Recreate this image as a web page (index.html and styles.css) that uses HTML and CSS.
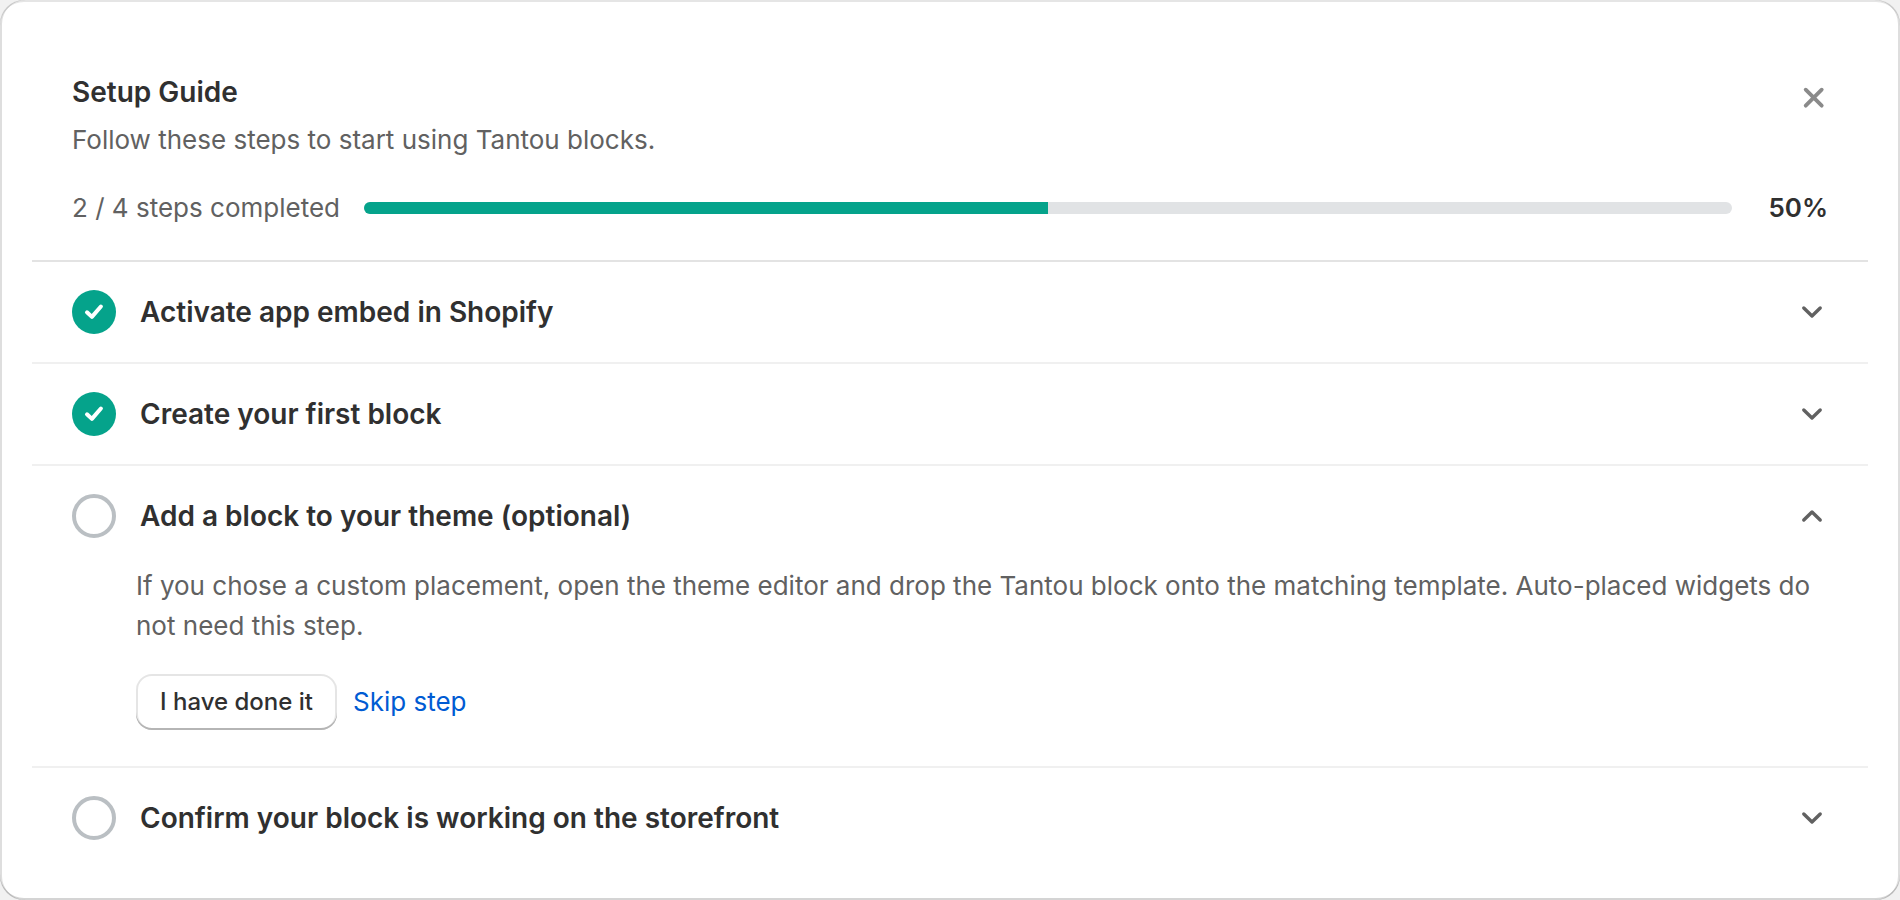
FILE: index.html
```html
<!DOCTYPE html>
<html lang="en">
<head>
    <meta charset="UTF-8">
    <meta name="viewport" content="width=device-width, initial-scale=1.0">
    <title>Setup Guide</title>
    <link rel="stylesheet" href="styles.css">
</head>
<body>
    <main class="card">
        <header class="guide-header">
            <div class="title-row">
                <div class="titles">
                    <h1>Setup Guide</h1>
                    <p>Follow these steps to start using Tantou blocks.</p>
                </div>
                <button type="button" class="close" aria-label="Dismiss setup guide">
                    <svg viewBox="0 0 28 28"><path d="M5.7 6.7l16 16M21.7 6.7l-16 16"/></svg>
                </button>
            </div>
            <div class="progress-row">
                <span id="progressLabel">2 / 4 steps completed</span>
                <div class="progress" role="progressbar" aria-labelledby="progressLabel" aria-valuenow="50" aria-valuemin="0" aria-valuemax="100">
                    <div class="progress-fill" style="width: 50%"></div>
                </div>
                <strong>50%</strong>
            </div>
        </header>

        <details class="step">
            <summary>
                <span class="status done">
                    <svg viewBox="0 0 44 44"><path d="M15 22.3l4.9 4.6 9-10.4"/></svg>
                </span>
                <h2>Activate app embed in Shopify</h2>
                <svg class="chevron" viewBox="0 0 32 32"><path d="M7.8 12l8.2 8 8.2-8"/></svg>
            </summary>
        </details>

        <details class="step">
            <summary>
                <span class="status done">
                    <svg viewBox="0 0 44 44"><path d="M15 22.3l4.9 4.6 9-10.4"/></svg>
                </span>
                <h2>Create your first block</h2>
                <svg class="chevron" viewBox="0 0 32 32"><path d="M7.8 12l8.2 8 8.2-8"/></svg>
            </summary>
        </details>

        <details class="step" open>
            <summary>
                <span class="status"></span>
                <h2>Add a block to your theme (optional)</h2>
                <svg class="chevron" viewBox="0 0 32 32"><path d="M7.8 12l8.2 8 8.2-8"/></svg>
            </summary>
            <div class="step-body">
                <p>If you chose a custom placement, open the theme editor and drop the Tantou block onto the matching template. Auto-placed widgets do not need this step.</p>
                <div class="actions">
                    <button type="button" class="button">I have done it</button>
                    <a href="#">Skip step</a>
                </div>
            </div>
        </details>

        <details class="step">
            <summary>
                <span class="status"></span>
                <h2>Confirm your block is working on the storefront</h2>
                <svg class="chevron" viewBox="0 0 32 32"><path d="M7.8 12l8.2 8 8.2-8"/></svg>
            </summary>
        </details>
    </main>
</body>
</html>
```
FILE: styles.css
```css
* {
    box-sizing: border-box;
}
body {
    margin: 0;
    background-color: #f1f1f1;
    color: #303030;
    font-family: Inter, sans-serif;
    font-size: 26px;
    font-weight: 420;
    line-height: 40px;
}
h1, h2, p {
    margin: 0;
}
h1, h2 {
    font-size: 28px;
    font-weight: 600;
}
svg {
    display: block;
    fill: none;
    stroke: currentColor;
    stroke-linecap: round;
    stroke-linejoin: round;
}
.card {
    padding: 32px;
    background: #fff;
    border-radius: 24px;
    box-shadow:
        inset 2px 0 0 rgba(0, 0, 0, 0.13),
        inset -2px 0 0 rgba(0, 0, 0, 0.13),
        inset 0 -2px 0 rgba(0, 0, 0, 0.17),
        inset 0 2px 0 rgba(204, 204, 204, 0.5);
}
.guide-header {
    padding: 40px 40px 32px;
    border-bottom: 2px solid #e3e3e3;
    color: #616161;
}
.title-row {
    display: flex;
    justify-content: space-between;
    align-items: flex-start;
    margin-bottom: 28px;
}
.titles {
    display: grid;
    gap: 8px;
}
.titles h1, .progress-row strong {
    color: #303030;
}
.close {
    margin-top: 11px;
    padding: 0;
    border: none;
    background: none;
    color: #8a8a8a;
    cursor: pointer;
}
.close svg {
    width: 28px;
    height: 28px;
    stroke-width: 3.8;
}
.progress-row {
    display: flex;
    align-items: center;
    gap: 24px;
}
.progress-row strong {
    margin-left: 12px;
    font-weight: 600;
}
.progress {
    flex: 1;
    height: 12px;
    overflow: hidden;
    border-radius: 6px;
    background: #e1e3e5;
}
.progress-fill {
    height: 100%;
    background: #05a38b;
}
.step + .step {
    border-top: 2px solid #f0f0f0;
}
.step summary {
    display: flex;
    align-items: center;
    gap: 24px;
    padding: 28px 40px;
    list-style: none;
    cursor: pointer;
}
.step h2 {
    flex: 1;
}
.status {
    width: 44px;
    height: 44px;
    border: 4px solid #babfc3;
    border-radius: 50%;
}
.status.done {
    border: none;
    background: #05a38b;
    color: #fff;
}
.status svg {
    stroke-width: 4;
}
.chevron {
    width: 32px;
    height: 32px;
    color: #616161;
    stroke-width: 3.4;
}
.step[open] .chevron {
    transform: rotate(180deg);
}
.step-body {
    padding: 0 40px 36px 104px;
    color: #616161;
}
.actions {
    display: flex;
    align-items: center;
    gap: 16px;
    margin-top: 28px;
}
.button {
    height: 56px;
    padding: 0 24px 2px;
    border: none;
    border-radius: 16px;
    background: #fff;
    color: #303030;
    font-family: inherit;
    font-size: 24px;
    font-weight: 500;
    box-shadow: inset 0 -2px 0 #b5b5b5, inset 0 0 0 2px rgba(0, 0, 0, 0.1);
    cursor: pointer;
}
a {
    color: #005bd3;
    text-decoration: none;
}
```
